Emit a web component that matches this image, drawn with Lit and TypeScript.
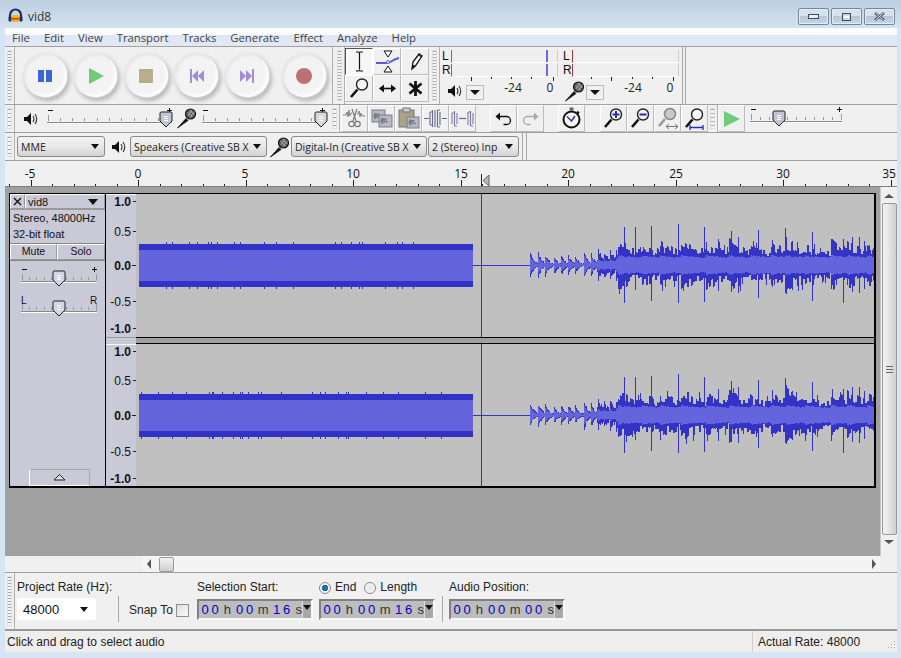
import { LitElement, html, css, svg } from "lit";
import { customElement } from "lit/decorators.js";

function rng(seed: number) {
  return () => {
    seed |= 0; seed = (seed + 0x6d2b79f5) | 0;
    let t = Math.imul(seed ^ (seed >>> 15), 1 | seed);
    t = (t + Math.imul(t ^ (t >>> 7), 61 | t)) ^ t;
    return ((t ^ (t >>> 14)) >>> 0) / 4294967296;
  };
}
const intro = [530, 538, 545, 554, 561, 568, 575, 584, 591, 598, 604, 610, 616];
const introAmp = [11, 11, 10, 8, 9, 9, 8, 12, 10, 9, 8, 9, 10];
const beats = [618, 642, 661, 682, 707, 730, 752, 772, 787, 806, 832, 848, 868];
const beatAmp = [12, 8, 9, 12, 8, 12, 5, 8, 13, 6, 11, 10, 7];
const spikes: [number, number, number][] = [
  [624, 38, 38], [635, 38, 25], [652, 39, 36], [679, 41, 38], [705, 38, 37], [719, 26, 26], [732, 34, 27], [739, 28, 28],
  [759, 35, 33], [773, 25, 22], [786, 37, 28], [793, 24, 25], [813, 33, 36], [833, 26, 20], [844, 26, 38], [853, 28, 27], [860, 28, 28], [865, 24, 24],
];
function wave(center: number, seed: number) {
  const r = rng(seed);
  let outer = "", inner = "";
  const X0 = 136;
  let nt = 1, nb = 1;
  for (let x = 530; x < 875; x++) {
    let t = 1, b = 1, i = 1;
    if (x % 2 === 0) { nt = 0.65 + r() * 0.6; nb = 0.65 + r() * 0.6; }
    if (x < 618) {
      let k = 0;
      for (let n = 0; n < intro.length; n++) if (intro[n] <= x) k = n;
      const d = x - intro[k];
      const e = Math.max(1.5, introAmp[k] * Math.exp(-d / 4));
      t = e * (0.8 + r() * 0.45);
      b = e * (0.8 + r() * 0.45);
      i = Math.max(1, e * 0.72);
      if (x > 596) { t += 3 + r() * 3; b += 3 + r() * 3; i = Math.max(i, 3.5); }
    } else {
      let k = 0;
      for (let n = 0; n < beats.length; n++) if (beats[n] <= x) k = n;
      const d = x - beats[k];
      const e = 11 + beatAmp[k] * Math.exp(-d / 15);
      t = e * nt;
      b = e * nb;
      i = Math.min(t, 6.5 + 2.5 * Math.exp(-d / 14) + r() * 1.2);
      if (r() > 0.92) t += 5;
      if (r() > 0.92) b += 6;
    }
    for (const s of spikes) if (s[0] === x) { t = s[1]; b = s[2]; }
    const px = x - X0 + 0.5;
    outer += `M${px} ${center - Math.round(t)}V${center + Math.round(b)}`;
    inner += `M${px} ${center - Math.round(i)}V${center + Math.round(i)}`;
  }
  return { outer, inner };
}

const C1 = wave(71, 11);
const C2 = wave(71, 29);

function blockTicks(seed: number) {
  const r = rng(seed);
  let d = "";
  for (let x = 138; x < 473; x += 1) {
    if (r() > 0.93) d += `M${x - 136 + 0.5} 48v2M${x - 136 + 0.5} 93v2`;
  }
  return d;
}

function channel(w: { outer: string; inner: string }, seed: number) {
  return html`<svg class="wave" width="738" height="143" viewBox="0 0 738 143" shape-rendering="crispEdges">
    <rect width="738" height="143" fill="#c0c0c0"/>
    <rect x="2" y="50" width="335" height="43" fill="#3232c8"/>
    <rect x="2" y="56" width="335" height="31" fill="#6464dc"/>
    <path d=${blockTicks(seed)} stroke="#3232c8" fill="none"/>
    <path d="M337 71.5H394" stroke="#3232c8" fill="none"/>
    <path d=${w.outer} stroke="#3232c8" fill="none"/>
    <path d=${w.inner} stroke="#6464dc" fill="none"/>
    <path d="M345.5 0V143" stroke="#444" fill="none"/>
  </svg>`;
}

const vr = (vals: [string, number, boolean][], h: number, top: boolean) => html`<svg width="30" height=${h} viewBox="0 0 30 ${h}" class="vr">
  ${top ? svg`<path d="M0 0.5H30" stroke="#fff" shape-rendering="crispEdges"/>` : ""}
  ${vals.map(([t, y, major]) => svg`<text x="25" y=${y + 4.5} text-anchor="end" class=${major ? "maj" : "min"}>${t}</text>
    <path d="M${t === "0.0" ? 26 : 27} ${y + 0.5}H30" stroke="#222" shape-rendering="crispEdges"/>`)}
</svg>`;

const speaker = svg`<path d="M1 6h3l4-4v12l-4-4H1z" fill="#111"/><path d="M10 5q2 3 0 6M12 3q3.500 5 0 10" stroke="#333" fill="none" stroke-width="1.100"/>`;
const speakerIcon = html`<svg class="ic" width="15" height="16" viewBox="0 0 15 16">${speaker}</svg>`;
const micBody = svg`<path d="M1.500 21 10 11.500 12 13.500z" fill="#111" stroke="#111" stroke-width=".8"/>
  <circle cx="14.500" cy="7" r="5" fill="#5c5c5c" stroke="#111" stroke-width="1.200"/>
  <path d="M11.500 5l5 5M13.500 3l5 5M12 9l4-6M14 10.500l4.500-6" stroke="#c8c8c8" stroke-width=".7"/>`;
const mic = html`<svg class="ic" width="21" height="22" viewBox="0 0 21 22">${micBody}</svg>`;

const thumb = (fill: string) => svg`<path d="M-5 -8h10a1.500 1.500 0 0 1 1 1v8l-6 6L-6 1v-8a1.500 1.500 0 0 1 1-1z" fill=${fill} stroke="#222" stroke-width="1"/>
  <path d="M-2 -3.500h4M-2 -1.500h4M-2 .5h4" stroke="#fff" shape-rendering="crispEdges"/>`;

function slider(w: number, th: number, labels: [string, string], fill = "#c4c4d8", ticks = 10) {
  const list: number[] = [];
  for (let i = 0; i <= ticks; i++) list.push(Math.round(0.5 + (i * (w - 2)) / ticks) + 0.5);
  return html`<svg class="ic slsvg" width=${w + 4} height="25" viewBox="0 0 ${w + 4} 25">
    ${labels[0] === "-"
      ? svg`<path d="M1 2.500h5" stroke="#111" shape-rendering="crispEdges"/><path d="M${w - 5} 2.500h5M${w - 2.500} 0v5" stroke="#111" shape-rendering="crispEdges"/>`
      : svg`<text x="0" y="7" class="sl">${labels[0]}</text><text x=${w - 7} y="7" class="sl">${labels[1]}</text>`}
    ${list.map((x, i) => svg`<path d="M${x} ${i === 0 || i === ticks ? 7 : 10}V13" stroke="#999" shape-rendering="crispEdges"/>`)}
    <path d="M0 14.500H${w}" stroke="#888" shape-rendering="crispEdges"/><path d="M0 15.500H${w}" stroke="#fff" shape-rendering="crispEdges"/>
    <g transform="translate(${th} 12)">${thumb(fill)}</g>
  </svg>`;
}

const mag = (extra: unknown = "") => svg`<path d="M4 21 10.500 13.500" stroke="#111" stroke-width="2.600"/>
  <circle cx="15" cy="8.500" r="5.500" fill="#f6f6f6" stroke="#222" stroke-width="1.400"/>${extra}`;
const gMag = svg`<path d="M4 20 10 13" stroke="#999" stroke-width="2.600"/><circle cx="15" cy="8" r="5.500" fill="#c8c8c8" stroke="#888" stroke-width="1.500"/>`;

const icon = (b: unknown) => html`<svg width="25" height="25" viewBox="0 0 25 25">${b}</svg>`;

const gw = "#808088";
const docWave = (x: number, y: number, w: number, h: number) => svg`<rect x=${x} y=${y} width=${w} height=${h} fill="#b8b8c0" stroke="#7a7a9a"/><path d="M${x + 1} ${y + h / 2}h2v-3v6v-5h2v4v-4h2v3h2" stroke="#777" fill="none"/>`;

const tools = [
  { on: true, i: html`<svg width="25" height="25" viewBox="0 0 25 25"><path d="M9 3h2.500q1 0 1 1.500q0-1.500 1-1.500H16M12.500 4V20M9 22h2.500q1 0 1-1.500q0 1.500 1 1.500H16" stroke="#111" stroke-width="1.200" fill="none"/></svg>` },
  { on: false, i: icon(svg`<path d="M9 2h8l-4 6zM9 23h8l-4-6z" fill="#fff" stroke="#111"/><path d="M1 14h9q4 0 7-2 3-2 7-3" stroke="#5a5ae0" stroke-width="2" fill="none"/><circle cx="13" cy="13" r="1.500" fill="#fff" stroke="#5a5ae0"/>`) },
  { on: false, i: icon(svg`<path d="M9 20 10 13 16 5l3 2-6 9z" fill="#fff" stroke="#111" stroke-width="1.300"/><path d="M9 20l1-4 3 1z" fill="#111"/><path d="M15.500 6l3 2" stroke="#111"/>`) },
  { on: false, i: icon(mag()) },
  { on: false, i: icon(svg`<path d="M5 12.500H20" stroke="#111" stroke-width="1.600"/><path d="M9 8.500 4 12.500 9 16.500zM16 8.500l5 4-5 4z" fill="#111"/>`) },
  { on: false, i: icon(svg`<path d="M12.500 5V20M6.500 7.500 18.500 17.500M18.500 7.500 6.500 17.500" stroke="#111" stroke-width="2.800"/>`) },
];

const editIcons = [
  icon(svg`<path d="M1 9h3l1-3 1 5 1-7 1 6 1-3h1M15 8h1l1-3 1 6 1-4 1 3h3" stroke=${gw} fill="none"/><path d="M10 3l4 12M15 3l-4 12" stroke="#777" stroke-width="1.200"/><circle cx="9.500" cy="18" r="2.700" fill="none" stroke="#777" stroke-width="1.200"/><circle cx="15.500" cy="18" r="2.700" fill="none" stroke="#777" stroke-width="1.200"/>`),
  icon(svg`${docWave(3, 4, 13, 12)}${docWave(10, 9, 13, 12)}`),
  icon(svg`<rect x="3" y="4" width="15" height="17" fill="#a8a488" stroke="#777"/><rect x="7" y="2" width="7" height="4" fill="#ccc" stroke="#777"/>${docWave(11, 11, 12, 11)}`),
  icon(svg`<path d="M1 12.500h5M19 12.500h5" stroke="#6a6a90" stroke-width="1.200"/><path d="M7 6v13M9.500 4v17M12 4v17M14.500 4v17M17 6v13M7 6h2.500M7 19h2.500M14.500 4h2.500M14.500 21h2.500" stroke="#6a6a90" stroke-width="1.100" fill="none"/>`),
  icon(svg`<path d="M9 12.500h7" stroke="#6a6a90" stroke-width="1.200"/><path d="M2 7v11M4.500 5v15M7 7v11M2 7h2.500M4.500 20H7M18 6v13M20.500 5v15M23 7v11M18 6h2.500M20.500 20H23" stroke="#7a7aa8" stroke-width="1.100" fill="none"/>`),
];
const undoIcons = [
  icon(svg`<path d="M8 10.500h7.500a3.700 3.700 0 0 1 0 8h-3" fill="none" stroke="#111" stroke-width="1.300"/><path d="M9 6.500v8L4.500 10.500z" fill="#111"/>`),
  icon(svg`<path d="M17 10.500H9.500a3.700 3.700 0 0 0 0 8h3" fill="none" stroke="#aaa" stroke-width="1.300"/><path d="M16 6.500v8l4.500-4z" fill="#aaa"/>`),
];
const timerIcon = icon(svg`<rect x="10.500" y="1.500" width="4" height="3" fill="#666"/><circle cx="12.500" cy="13.500" r="8" fill="#f6f6f6" stroke="#111" stroke-width="2"/><path d="M8 10.500l4.500 4.500 3.500-5" stroke="#3838a8" stroke-width="1.500" fill="none"/><path d="M18 5.500l2 2" stroke="#111" stroke-width="2"/>`);
const zoomIcons = [
  icon(mag(svg`<path d="M11.500 8.500h7M15 5v7" stroke="#2828c8" stroke-width="2"/>`)),
  icon(mag(svg`<path d="M11.500 8.500h7" stroke="#2828c8" stroke-width="2"/>`)),
  icon(svg`${gMag}<path d="M11 20.500h12M14 18 11 20.500l3 2.500M20 18l3 2.500-3 2.500" stroke="#777" fill="none"/>`),
  icon(svg`${mag()}<path d="M8 21.500h13M8 19v5M21 19v5" stroke="#2828c8" stroke-width="1.300"/>`),
];

const rulerLabels: [string, number][] = [["-5", 25], ["0", 133], ["5", 240], ["10", 348], ["15", 456], ["20", 563], ["25", 671], ["30", 778], ["35", 884]];
const rulerTicks: number[] = [];
for (let s = -6; s <= 35; s++) rulerTicks.push(Math.round(133 + s * 21.5));

function timeBox(d: string[]) {
  return html`<div class="tb"><div class="tbt">
    <span class="d">${d[0]}</span><span class="d">${d[1]}</span><span class="u">h</span>
    <span class="d">${d[2]}</span><span class="d">${d[3]}</span><span class="u um">m</span>
    <span class="d">${d[4]}</span><span class="d">${d[5]}</span><span class="u us">s</span>
  </div><div class="tbd"><i class="tri"></i></div></div>`;
}
const combo = (t: string, cls: string) => html`<div class="combo ${cls}"><span class="ct">${t}</span><i class="tri"></i></div>`;

const menuItems = ["File", "Edit", "View", "Transport", "Tracks", "Generate", "Effect", "Analyze", "Help"];

@customElement("app-root")
export class AppRoot extends LitElement {
  static styles = css`
    :host { display: block; width: 901px; height: 658px; overflow: hidden; background: #d6e5f3; font-family: "Liberation Sans", Arial, sans-serif; font-size: 12px; color: #111; }
    svg { display: block; }
    .title { height: 28px; display: flex; align-items: flex-start; background: linear-gradient(#bccfdf, #d3e2f0); }
    .hp { margin: 8px 0 0 8px; }
    .tt { margin: 9px 0 0 5px; font: 12px/16px "Open Sans", sans-serif; color: #333; }
    .wb { margin: 8px 6px 0 auto; display: flex; gap: 2px; }
    .wbtn { width: 29px; height: 15px; border: 1px solid #76879b; border-radius: 2px; background: linear-gradient(#d5e2ee 0 45%, #b5c6d6 50%, #c6d6e4); box-shadow: inset 0 0 0 1px #e4edf5; display: flex; align-items: center; justify-content: center; }
    .client { margin: 0 4px 0 5px; height: 624px; display: flex; flex-direction: column; background: #f0f0f0; }
    .client > * { flex: none; }
    .menu { height: 18px; display: flex; align-items: center; padding-left: 7px; gap: 14px; background: linear-gradient(#fbfcfe 0 7px, #dfe5f3 7px, #e3e8f5); border-bottom: 1px solid #a0a0a0; font: 11.300px "Open Sans", sans-serif; color: #444; }
    .row { display: flex; border-bottom: 1px solid #a0a0a0; box-sizing: border-box; }
    .r1 { height: 58px; }
    .r2 { height: 28px; }
    .r3 { height: 28px; align-items: center; }
    .grip { width: 10px; flex: none; align-self: stretch; box-sizing: border-box; border-right: 1px solid #b0b0b0; padding: 3px 2px; }
    .grip::before { content: ""; display: block; height: 100%; background: repeating-linear-gradient(#a8a8a8 0 1px, #f6f6f6 1px 3px); border: 1px solid #ddd; box-sizing: border-box; }
    .grip.g2::before { background: repeating-linear-gradient(#a8a8a8 0 1px, #f6f6f6 1px 4px); }
    .transport { width: 318px; display: flex; align-items: center; gap: 6.600px; padding-left: 8px; box-sizing: border-box; border-right: 1px solid #b0b0b0; flex: none; }
    .rb { width: 43px; height: 43px; margin: 0 .5px; flex: none; border-radius: 50%; background: radial-gradient(circle at 50% 50%, #f3f3f3 0 70%, #e9e9e9 100%); box-shadow: 0 0 2px 1px #e0e0e0, 2px 3px 4px 1px #b4b4b4, -1px -1px 2px #fafafa, inset -2px -2px 3px #fff, inset 1px 1px 3px #e2e2e2; display: flex; align-items: center; justify-content: center; }
    .rec { margin-left: 7px; }
    .spacer { width: 2px; flex: none; }
    .toolgrid { width: 84px; flex: none; display: grid; grid-template-columns: repeat(3, 28px); grid-template-rows: 27px 27px; margin-top: 1px; }
    .ctl { box-sizing: border-box; border: 1px solid; border-color: #fff #bbb #bbb #fff; background: #f0f0f0; display: flex; align-items: center; justify-content: center; }
    .ctl.on { border-color: #555 #fff #fff #555; background: #f6f6f6; }
    .spacer1 { width: 1px; flex: none; }
    .meters { width: 243px; flex: none; border-right: 1px solid #a8a8a8; display: flex; flex-direction: column; box-sizing: border-box; }
    .mtop { display: grid; grid-template-columns: 121px 120px; padding-top: 2px; }
    .mpair { display: grid; grid-template-rows: 14px 14px; }
    .mrow { display: flex; align-items: center; font-size: 12px; height: 14px; padding-left: 2px; }
    .mlabel { width: 9px; }
    .mbar { width: 106px; height: 13px; background: #efefef; border-bottom: 1px solid #fff; box-sizing: border-box; display: flex; border-left: 1px solid #3a9a3a; }
    .mbar.rec2 { border-left-color: #a03a3a; }
    .mfill { width: 94px; flex: none; }
    .mpk { width: 2px; background: #6a6af0; flex: none; }
    .mtail { width: 9px; flex: none; border-right: 1px solid #ccc; }
    .mtail2 { width: 11px; }
    .blank { flex: 1; border-left: 1px solid #a8a8a8; margin-left: 2px; }
    .ed { display: flex; flex: none; }
    .ed .ctl { width: 27px; height: 27px; }
    .ed1 { margin-left: 1px; }
    .gapA { width: 14px; flex: none; }
    .gapB { width: 15px; flex: none; }
    .slgroup { display: flex; align-items: flex-start; flex: none; width: 315px; padding-top: 2px; box-sizing: border-box; }
    .slgroup .ic { flex: none; }
    .spk2 { margin: 4px 2px 0 8px; }
    .s-a { margin: 1px 0 0 7px; }
    .s-b { margin: 1px 0 0 5px; }
    .s-c { margin: 2px 0 0 5px; }
    .slsvg { overflow: visible; }
    .sl { font: 10px "Liberation Sans", sans-serif; fill: #111; }
    .combo { box-sizing: border-box; height: 21px; border: 1px solid #8a8a8a; border-radius: 3px; background: linear-gradient(#f3f3f3, #e8e8e8 50%, #d2d2d2); display: flex; align-items: center; padding: 0 5px 0 3px; font: 10.500px "Open Sans", sans-serif; color: #222; flex: none; }
    .ct { flex: 1; white-space: nowrap; overflow: hidden; margin-right: 2px; }
    .tri { display: block; width: 0; height: 0; border: 4px solid transparent; border-top: 5px solid #111; border-bottom: 0; flex: none; }
    .c1 { width: 88px; margin-left: 2px; }
    .c2 { width: 137px; }
    .c3 { width: 136px; }
    .c4 { width: 91px; margin-left: 1px; }
    .r3 .ic { flex: none; }
    .i1 { margin: 0 4px 0 6px; }
    .i2 { margin: 0 1px 0 2px; }
    .sep3 { width: 3px; align-self: stretch; border-left: 1px solid #a8a8a8; border-right: 1px solid #a8a8a8; margin-left: 3px; }
    .ruler text { font: 12px "Open Sans", sans-serif; fill: #111; text-anchor: middle; }
    .meterTxt { font: 12px "Open Sans", sans-serif; fill: #222; text-anchor: middle; }
    .main { height: 369px; display: flex; }
    .area { width: 875px; height: 369px; background: #a0a0a0; display: flex; flex-direction: column; border-right: 1px solid #c8c8c8; }
    .trk { margin: 6px 0 0 4px; width: 867px; height: 295px; box-sizing: border-box; border: 1px solid #000; border-width: 1px 2px 2px 1px; display: flex; background: #c0c0c0; overflow: hidden; }
    .panel { width: 96px; box-sizing: border-box; border-right: 1px solid #000; flex: none; background: #c9c9d7; display: flex; flex-direction: column; font-size: 11px; }
    .phead { display: flex; height: 15px; border-bottom: 1px solid #999; }
    .xb { width: 15px; box-sizing: border-box; border: 1px solid; border-color: #fff #999 #999 #fff; display: flex; align-items: center; justify-content: center; }
    .nb { flex: 1; box-sizing: border-box; border: 1px solid; border-color: #fff #999 #999 #fff; display: flex; align-items: center; padding: 0 6px 0 2px; justify-content: space-between; }
    .nb .tri { border-width: 5px; border-top-width: 6px; border-bottom-width: 0; }
    .pinfo { padding-left: 3px; line-height: 16px; height: 34px; box-sizing: border-box; border-bottom: 1px solid #888; }
    .mrow2 { display: grid; grid-template-columns: 47px 48px; height: 16px; border-bottom: 1px solid #888; }
    .mrow2 div { box-sizing: border-box; border: 1px solid; border-color: #fff #999 #999 #fff; text-align: center; line-height: 13px; font-size: 10.500px; }
    .psl { margin: 6px 0 0 11px; display: flex; flex-direction: column; gap: 5px; }
    .pflex { flex: 1; display: flex; align-items: flex-end; justify-content: center; padding-left: 4px; }
    .coll { width: 61px; height: 17px; box-sizing: border-box; border: 1px solid #a8a8a8; border-left-color: #fff; border-bottom-color: #fff; display: flex; align-items: center; justify-content: center; }
    .rulers { display: flex; flex-direction: column; width: 30px; flex: none; background: #c9c9d7; }
    .vr text { fill: #111; }
    .vr .maj { font: 700 12px "Liberation Sans", sans-serif; }
    .vr .min { font: 12px "Liberation Sans", sans-serif; }
    .rgap { height: 7px; box-sizing: border-box; border-top: 1px solid #9a9a9a; flex: none; }
    .vgap { height: 7px; box-sizing: border-box; background: #a0a0a0; border: 1px solid #000; border-width: 1px 0; flex: none; }
    .waves { flex: none; display: flex; flex-direction: column; width: 738px; overflow: hidden; }
    .vbar { width: 16px; background: #f0f0f0; display: flex; flex-direction: column; align-items: center; }
    .ua { margin-top: 7px; width: 0; height: 0; border: 5px solid transparent; border-bottom: 4px solid #555; border-top: 0; }
    .da { margin-top: 5px; width: 0; height: 0; border: 5px solid transparent; border-top: 4px solid #555; border-bottom: 0; }
    .vt { margin-top: 5px; width: 15px; height: 332px; box-sizing: border-box; border: 1px solid #9a9a9a; border-radius: 2px; background: linear-gradient(90deg, #f2f2f2, #e6e6e6 45%, #cfcfcf); display: flex; align-items: center; justify-content: center; }
    .grips { width: 7px; height: 7px; background: repeating-linear-gradient(#666 0 1px, transparent 1px 3px); }
    .hbarw { height: 17px; display: flex; border-bottom: 1px solid #a0a0a0; box-sizing: border-box; }
    .hb { margin-left: 137px; width: 738px; background: #f4f4f4; display: flex; align-items: center; height: 16px; }
    .la { margin-left: 5px; width: 0; height: 0; border: 5px solid transparent; border-right: 4px solid #555; border-left: 0; }
    .ht { margin-left: 8px; width: 15px; height: 15px; box-sizing: border-box; border: 1px solid #9a9a9a; border-radius: 2px; background: linear-gradient(#f2f2f2, #cfcfcf); }
    .ra { margin-left: auto; margin-right: 4px; width: 0; height: 0; border: 5px solid transparent; border-left: 4px solid #555; border-right: 0; }
    .sel { height: 58px; display: flex; border-bottom: 2px solid #999; box-sizing: border-box; }
    .sel .grip { margin-right: 2px; }
    .col { display: flex; flex-direction: column; flex: none; }
    .w1 { width: 101px; }
    .w2 { width: 78px; padding-left: 10px; box-sizing: border-box; }
    .w3 { width: 122px; }
    .w4 { width: 123px; }
    .w5 { margin-left: 6px; }
    .lab { font: 12px/15px "Liberation Sans", sans-serif; color: #222; height: 22px; box-sizing: border-box; padding-top: 7px; display: flex; align-items: center; }
    .rate { width: 79px; height: 22px; background: #fff; box-sizing: border-box; border-radius: 2px; margin-top: 3px; display: flex; align-items: center; justify-content: space-between; padding: 0 8px 0 6px; font-size: 13px; }
    .vsep { width: 1px; height: 26px; background: #a8a8a8; align-self: flex-end; margin-bottom: 7px; flex: none; }
    .snap { display: flex; align-items: center; gap: 3px; font: 12px "Liberation Sans", sans-serif; height: 22px; margin-top: 26px; color: #222; }
    .cb { width: 13px; height: 13px; box-sizing: border-box; border: 1px solid #8e8f8f; background: linear-gradient(135deg, #dedede, #fbfbfb); }
    .tb { width: 116px; height: 21px; box-sizing: border-box; margin-top: 4px; border: 2px solid; border-color: #808080 #f8f8f8 #f8f8f8 #808080; background: #bdbdbd; display: flex; font: 13px/17px "Liberation Sans", sans-serif; }
    .tbt { flex: 1; min-width: 0; display: flex; padding-left: 1px; }
    .d { color: #0000c8; width: 10px; text-align: center; flex: none; }
    .u { color: #333; width: 14.600px; text-align: center; flex: none; }
    .um { width: 17px; }
    .us { width: 10.400px; text-align: right; }
    .tbd { width: 9px; background: #a8a8a8; border-left: 1px solid #ddd; display: flex; justify-content: center; padding-top: 4px; box-sizing: border-box; flex: none; }
    .tbd .tri { border-width: 4px; border-top-width: 5px; }
    .radio { display: flex; align-items: center; gap: 4px; }
    .rd { width: 12px; height: 12px; box-sizing: border-box; border-radius: 50%; border: 1px solid #8a8a8a; background: radial-gradient(circle, #e8e8e8, #fafafa); }
    .rd.on { background: radial-gradient(circle, #1d6fa8 0 3px, #f4f4f4 3.500px); }
    .radios { gap: 8px; }
    .status { height: 21px; background: #f0eded; display: flex; align-items: center; font: 12px "Liberation Sans", sans-serif; color: #222; }
    .st1 { width: 748px; padding: 1px 0 0 2px; box-sizing: border-box; border-right: 1px solid #d0d0d0; height: 100%; display: flex; align-items: center; flex: none; }
    .st2 { padding: 1px 0 0 5px; flex: 1; }
    .sz { margin: 9px 1px 0 0; align-self: flex-start; }
  `;

  render() {
    return html`
      <div class="title">
        <svg class="hp" width="15" height="15" viewBox="0 0 15 15">
          <path d="M2 10V7a5.500 5.500 0 0 1 11 0v3" fill="none" stroke="#1c2c6c" stroke-width="2.200"/>
          <rect x="4" y="7" width="7" height="7" rx="1.500" fill="#f2b705"/><rect x="4" y="10" width="7" height="1.500" fill="#d8342a"/>
          <rect x="0.500" y="8.500" width="3" height="5" rx="1" fill="#1c2c6c"/><rect x="11.500" y="8.500" width="3" height="5" rx="1" fill="#1c2c6c"/>
        </svg>
        <div class="tt">vid8</div>
        <div class="wb">
          <div class="wbtn"><svg width="11" height="5" viewBox="0 0 11 5"><rect x=".5" y=".5" width="10" height="4" fill="#e8eef4" stroke="#3c4c60"/></svg></div>
          <div class="wbtn"><svg width="9" height="8" viewBox="0 0 9 8"><rect x=".5" y=".5" width="8" height="7" fill="#c8d6e4" stroke="#3c4c60"/><rect x="2" y="3" width="5" height="2" fill="#fff"/></svg></div>
          <div class="wbtn"><svg width="11" height="9" viewBox="0 0 11 9"><path d="M1 1l9 7M10 1 1 8" stroke="#3c4c60" stroke-width="2.400"/><path d="M1.500 1l8 7M9.500 1l-8 7" stroke="#e8eef4" stroke-width="1"/></svg></div>
        </div>
      </div>
      <div class="client">
        <div class="menu">${menuItems.map((m) => html`<span>${m}</span>`)}</div>

        <div class="row r1">
          <div class="grip"></div>
          <div class="transport">
            <div class="rb"><svg width="14" height="14" viewBox="0 0 14 14"><path d="M0 1h6v12H0zM8 1h6v12H8z" fill="#3a66dc"/></svg></div>
            <div class="rb"><svg width="16" height="16" viewBox="0 0 16 16"><path d="M1 0 16 8 1 16z" fill="#6ccc78"/></svg></div>
            <div class="rb"><svg width="14" height="14" viewBox="0 0 14 14"><rect width="14" height="14" fill="#baad8d"/></svg></div>
            <div class="rb"><svg width="14" height="14" viewBox="0 0 14 14"><path d="M0 0h2v14H0zM2 7l6-6v12zM8 7l6-6v12z" fill="#a08ed8"/></svg></div>
            <div class="rb"><svg width="14" height="14" viewBox="0 0 14 14"><path d="M12 0h2v14h-2zM12 7 6 1v12zM6 7 0 1v12z" fill="#a08ed8"/></svg></div>
            <div class="rb rec"><svg width="16" height="16" viewBox="0 0 16 16"><circle cx="8" cy="8" r="8" fill="#bc7272"/></svg></div>
          </div>
          <div class="spacer"></div>
          <div class="grip"></div>
          <div class="toolgrid">${tools.map((t) => html`<div class="ctl ${t.on ? "on" : ""}">${t.i}</div>`)}</div>
          <div class="spacer1"></div>
          <div class="grip"></div>
          <div class="meters">
            <div class="mtop">
              <div class="mpair">
                <div class="mrow"><span class="mlabel">L</span><div class="mbar"><div class="mfill"></div><div class="mpk"></div><div class="mtail"></div></div></div>
                <div class="mrow"><span class="mlabel">R</span><div class="mbar"><div class="mfill"></div><div class="mpk"></div><div class="mtail"></div></div></div>
              </div>
              <div class="mpair">
                <div class="mrow"><span class="mlabel">L</span><div class="mbar rec2"><div class="mfill"></div><div class="mtail mtail2"></div></div></div>
                <div class="mrow"><span class="mlabel">R</span><div class="mbar rec2"><div class="mfill"></div><div class="mtail mtail2"></div></div></div>
              </div>
            </div>
            <svg width="242" height="27" viewBox="0 0 242 27">
              <path d="M31.500 0v4M51.500 0v2M71.500 0v2M91.500 0v2M113.500 0v4M151.500 0v2M171.500 0v4M192.500 0v2M212.500 0v2M233.500 0v4" stroke="#222" shape-rendering="crispEdges"/>
              <text class="meterTxt" x="73" y="15">-24</text><text class="meterTxt" x="110" y="15">0</text><text class="meterTxt" x="193" y="15">-24</text><text class="meterTxt" x="230" y="15">0</text>
              <g transform="translate(7 6)">${speaker}</g>
              <g transform="translate(26 8)"><rect x=".5" y=".5" width="17" height="14" fill="#f0f0f0" stroke="#bbb"/><path d="M4 5h10l-5 5z" fill="#111"/></g>
              <g transform="translate(146 8)"><rect x=".5" y=".5" width="17" height="14" fill="#f0f0f0" stroke="#bbb"/><path d="M4 5h10l-5 5z" fill="#111"/></g>
              <g transform="translate(124 3)">${micBody}</g>
            </svg>
          </div>
          <div class="blank"></div>
        </div>

        <div class="row r2">
          <div class="grip g2"></div>
          <div class="slgroup">
            <div class="spk2">${speakerIcon}</div>
            <div class="s-a">${slider(125, 119, ["-", "+"], "#c4c4d8")}</div>
            <div>${mic}</div>
            <div class="s-b">${slider(123, 119, ["-", "+"], "#d8d8d8")}</div>
          </div>
          <div class="grip g2"></div>
          <div class="ed ed1">${editIcons.map((i) => html`<div class="ctl">${i}</div>`)}</div>
          <div class="gapA"></div>
          <div class="ed">${undoIcons.map((i) => html`<div class="ctl">${i}</div>`)}</div>
          <div class="gapA"></div>
          <div class="ed"><div class="ctl">${timerIcon}</div></div>
          <div class="gapB"></div>
          <div class="ed">${zoomIcons.map((i) => html`<div class="ctl">${i}</div>`)}</div>
          <div class="grip g2"></div>
          <div class="ed"><div class="ctl"><svg width="18" height="18" viewBox="0 0 18 18"><path d="M1 1 17 9 1 17z" fill="#6ccc78"/></svg></div></div>
          <div class="s-c">${slider(92, 29, ["-", "+"], "#c4c4d8")}</div>
        </div>

        <div class="row r3">
          <div class="grip g2"></div>
          ${combo("MME", "c1")}
          <div class="ic i1">${speakerIcon}</div>
          ${combo("Speakers (Creative SB X", "c2")}
          <div class="ic i2">${mic}</div>
          ${combo("Digital-In (Creative SB X", "c3")}
          ${combo("2 (Stereo) Inp", "c4")}
          <div class="sep3"></div>
        </div>

        <svg class="ruler" width="892" height="26" viewBox="0 0 892 26">
          <rect width="892" height="26" fill="#f0f0f0"/>
          ${rulerLabels.map(([t, x]) => svg`<text x=${x} y="17">${t}</text>`)}
          ${rulerTicks.map((x, i) => svg`<path d="M${x + 0.5} ${i % 5 === 1 ? 19 : 23}V25" stroke="#222" shape-rendering="crispEdges"/>`)}
          <path d="M476 13v12" stroke="#222" shape-rendering="crispEdges"/>
          <path d="M484 14v11l-6-5.500z" fill="#b8b8b8" stroke="#666"/>
          <rect y="25" width="892" height="1" fill="#808080"/>
        </svg>

        <div class="main">
          <div class="area">
            <div class="trk">
              <div class="panel">
                <div class="phead">
                  <div class="xb"><svg width="9" height="9" viewBox="0 0 9 9"><path d="M1 1l7 7M8 1 1 8" stroke="#111" stroke-width="1.400"/></svg></div>
                  <div class="nb"><span>vid8</span><i class="tri"></i></div>
                </div>
                <div class="pinfo"><div>Stereo, 48000Hz</div><div>32-bit float</div></div>
                <div class="mrow2"><div>Mute</div><div>Solo</div></div>
                <div class="psl">
                  ${slider(76, 38, ["-", "+"], "#d4d4e4")}
                  ${slider(76, 38, ["L", "R"], "#d4d4e4")}
                </div>
                <div class="pflex"><div class="coll"><svg width="13" height="7" viewBox="0 0 13 7"><path d="M6.500 .5 12 6H1z" fill="#dcdce4" stroke="#222"/></svg></div></div>
              </div>
              <div class="rulers">
                ${vr([["1.0", 7, true], ["0.5", 37, false], ["0.0", 71, true], ["-0.5", 107, false], ["-1.0", 134, true]], 143, true)}
                <div class="rgap"></div>
                ${vr([["1.0", 7, true], ["0.5", 36, false], ["0.0", 71, true], ["-0.5", 107, false], ["-1.0", 134, true]], 142, true)}
              </div>
              <div class="waves">
                ${channel(C1, 5)}
                <div class="vgap"></div>
                ${channel(C2, 7)}
              </div>
            </div>
          </div>
          <div class="vbar">
            <div class="ua"></div>
            <div class="vt"><div class="grips"></div></div>
            <div class="da"></div>
          </div>
        </div>

        <div class="hbarw">
          <div class="hb"><div class="la"></div><div class="ht"></div><div class="ra"></div></div>
        </div>

        <div class="sel">
          <div class="grip"></div>
          <div class="col w1">
            <div class="lab">Project Rate (Hz):</div>
            <div class="rate"><span>48000</span><i class="tri"></i></div>
          </div>
          <div class="vsep"></div>
          <div class="col w2">
            <div class="snap">Snap&nbsp;To<div class="cb"></div></div>
          </div>
          <div class="col w3">
            <div class="lab">Selection Start:</div>
            ${timeBox(["0", "0", "0", "0", "1", "6"])}
          </div>
          <div class="col w4">
            <div class="lab radios">
              <div class="radio"><div class="rd on"></div>End</div>
              <div class="radio"><div class="rd"></div>Length</div>
            </div>
            ${timeBox(["0", "0", "0", "0", "1", "6"])}
          </div>
          <div class="vsep"></div>
          <div class="col w5">
            <div class="lab">Audio Position:</div>
            ${timeBox(["0", "0", "0", "0", "0", "0"])}
          </div>
        </div>

        <div class="status">
          <div class="st1">Click and drag to select audio</div>
          <div class="st2">Actual Rate: 48000</div>
          <svg class="sz" width="10" height="10" viewBox="0 0 10 10"><path d="M8 1h1v1H8zM5 4h1v1H5zM8 4h1v1H8zM2 7h1v1H2zM5 7h1v1H5zM8 7h1v1H8z" fill="#aaa"/></svg>
        </div>
      </div>
    `;
  }
}
